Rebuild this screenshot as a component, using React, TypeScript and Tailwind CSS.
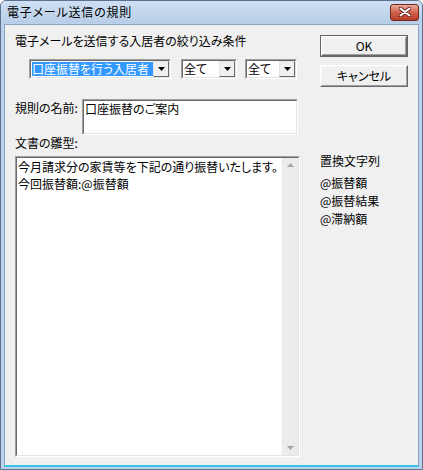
const jp = "font-['Noto_Sans_CJK_JP','Noto_Sans',sans-serif]";

function Sunken({ className = '', children }: { className?: string; children?: React.ReactNode }) {
  return (
    <div className={`border border-t-[#a0a0a0] border-l-[#a0a0a0] border-b-white border-r-white ${className}`}>
      <div className="w-full h-full border border-t-[#696969] border-l-[#696969] border-b-[#e3e3e3] border-r-[#e3e3e3] bg-white flex">
        {children}
      </div>
    </div>
  );
}

function DropButton() {
  return (
    <div className="w-[16px] h-full border border-t-[#e3e3e3] border-l-[#e3e3e3] border-b-[#696969] border-r-[#696969] bg-[#f0f0f0] flex items-center justify-center">
      <svg width="7" height="4" viewBox="0 0 7 4">
        <path d="M0 0h7L3.5 4z" fill="#000" />
      </svg>
    </div>
  );
}

function Combo({ w, text, selected }: { w: string; text: string; selected?: boolean }) {
  return (
    <Sunken className={`${w} h-[20px]`}>
      <div className="flex-1 flex items-center px-[1px] min-w-0">
        <span
          className={`leading-[14px] whitespace-nowrap pr-[4px] ${selected ? 'bg-[#3399ff] text-white flex-1' : 'text-black'}`}
        >
          {text}
        </span>
      </div>
      <DropButton />
    </Sunken>
  );
}

function Button({ label, isDefault }: { label: string; isDefault?: boolean }) {
  return (
    <div className={`w-[88px] h-[22px] ${isDefault ? 'border border-[#646464]' : ''}`}>
      <div className="w-full h-full border border-t-white border-l-white border-b-[#696969] border-r-[#696969]">
        <div className="w-full h-full border border-t-[#f5f5f5] border-l-[#f5f5f5] border-b-[#a0a0a0] border-r-[#a0a0a0] bg-[#f0f0f0] flex items-center justify-center text-[12px] leading-none text-black">
          {label}
        </div>
      </div>
    </div>
  );
}

export default function App() {
  return (
    <div className={`w-[423px] h-[470px] flex flex-col bg-[#bcd2eb] border border-[#5d7290] rounded-t-[6px] overflow-hidden ${jp} text-[12px] text-black [font-feature-settings:'palt']`}>
      {/* Title bar */}
      <div className="h-[22px] flex items-center justify-between pl-[6px] pr-[3px] bg-gradient-to-b from-[#cfe0f3] to-[#b7cde7]">
        <span className="text-[12px] leading-none tracking-[0.8px]">電子メール送信の規則</span>
        <div className="w-[29px] h-[17px] rounded-[3px] border border-[#6e2a22] bg-gradient-to-b from-[#e9a99b] via-[#d1614c] to-[#b83a27] flex items-center justify-center">
          <svg width="12" height="10" viewBox="0 0 12 10">
            <path d="M1.5 1.5l9 7M10.5 1.5l-9 7" stroke="#5b2019" strokeWidth="3.6" strokeLinecap="round" />
            <path d="M1.5 1.5l9 7M10.5 1.5l-9 7" stroke="#fff" strokeWidth="2" strokeLinecap="round" />
          </svg>
        </div>
      </div>

      {/* Client area */}
      <div className="flex-1 mx-[3px] mb-[2px] mt-[1px] bg-[#f0f0f0] border border-[#8aa4c4] border-b-[#3cc6e6] border-b-2 flex pl-[10px] pt-[9px]">
        {/* Left column */}
        <div className="w-[284px] flex flex-col">
          <div className="leading-[14px] whitespace-nowrap">電子メールを送信する入居者の絞り込み条件</div>
          <div className="flex mt-[11px] ml-[14px] gap-[10px]">
            <Combo w="w-[142px]" text="口座振替を行う入居者" selected />
            <Combo w="w-[56px]" text="全て" />
            <div className="-ml-[2px]">
              <Combo w="w-[52px]" text="全て" />
            </div>
          </div>

          <div className="flex mt-[20px]">
            <div className="w-[67px] leading-[14px] pt-[2px]">規則の名前:</div>
            <Sunken className="w-[216px] h-[36px]">
              <div className="px-[1px] pt-[1px] leading-[14px]">口座振替のご案内</div>
            </Sunken>
          </div>

          <div className="mt-[1px] leading-[14px]">文書の雛型:</div>

          <Sunken className="mt-[6px] w-[285px] h-[301px]">
            <div className="flex-1 px-[1px] pt-[0px] leading-[17px]">
              <div className="whitespace-nowrap">今月請求分の家賃等を下記の通り振替いたします。</div>
              <div className="whitespace-nowrap">今回振替額:@振替額</div>
            </div>
            <div className="w-[17px] h-full bg-[#ececec] border-l border-[#f7f7f7] flex flex-col justify-between items-center py-[5px]">
              <svg width="7" height="4" viewBox="0 0 7 4">
                <path d="M3.5 0L7 4H0z" fill="#a3a3a3" />
              </svg>
              <svg width="7" height="4" viewBox="0 0 7 4">
                <path d="M0 0h7L3.5 4z" fill="#a3a3a3" />
              </svg>
            </div>
          </Sunken>
        </div>

        {/* Right column */}
        <div className="ml-[21px] flex flex-col">
          <div className="mt-[1px]">
            <Button label="OK" isDefault />
          </div>
          <div className="mt-[8px]">
            <Button label="キャンセル" />
          </div>
          <div className="mt-[67px] leading-[14px]">置換文字列</div>
          <div className="mt-[6px] leading-[18px]">
            <div>@振替額</div>
            <div>@振替結果</div>
            <div>@滞納額</div>
          </div>
        </div>
      </div>
    </div>
  );
}
